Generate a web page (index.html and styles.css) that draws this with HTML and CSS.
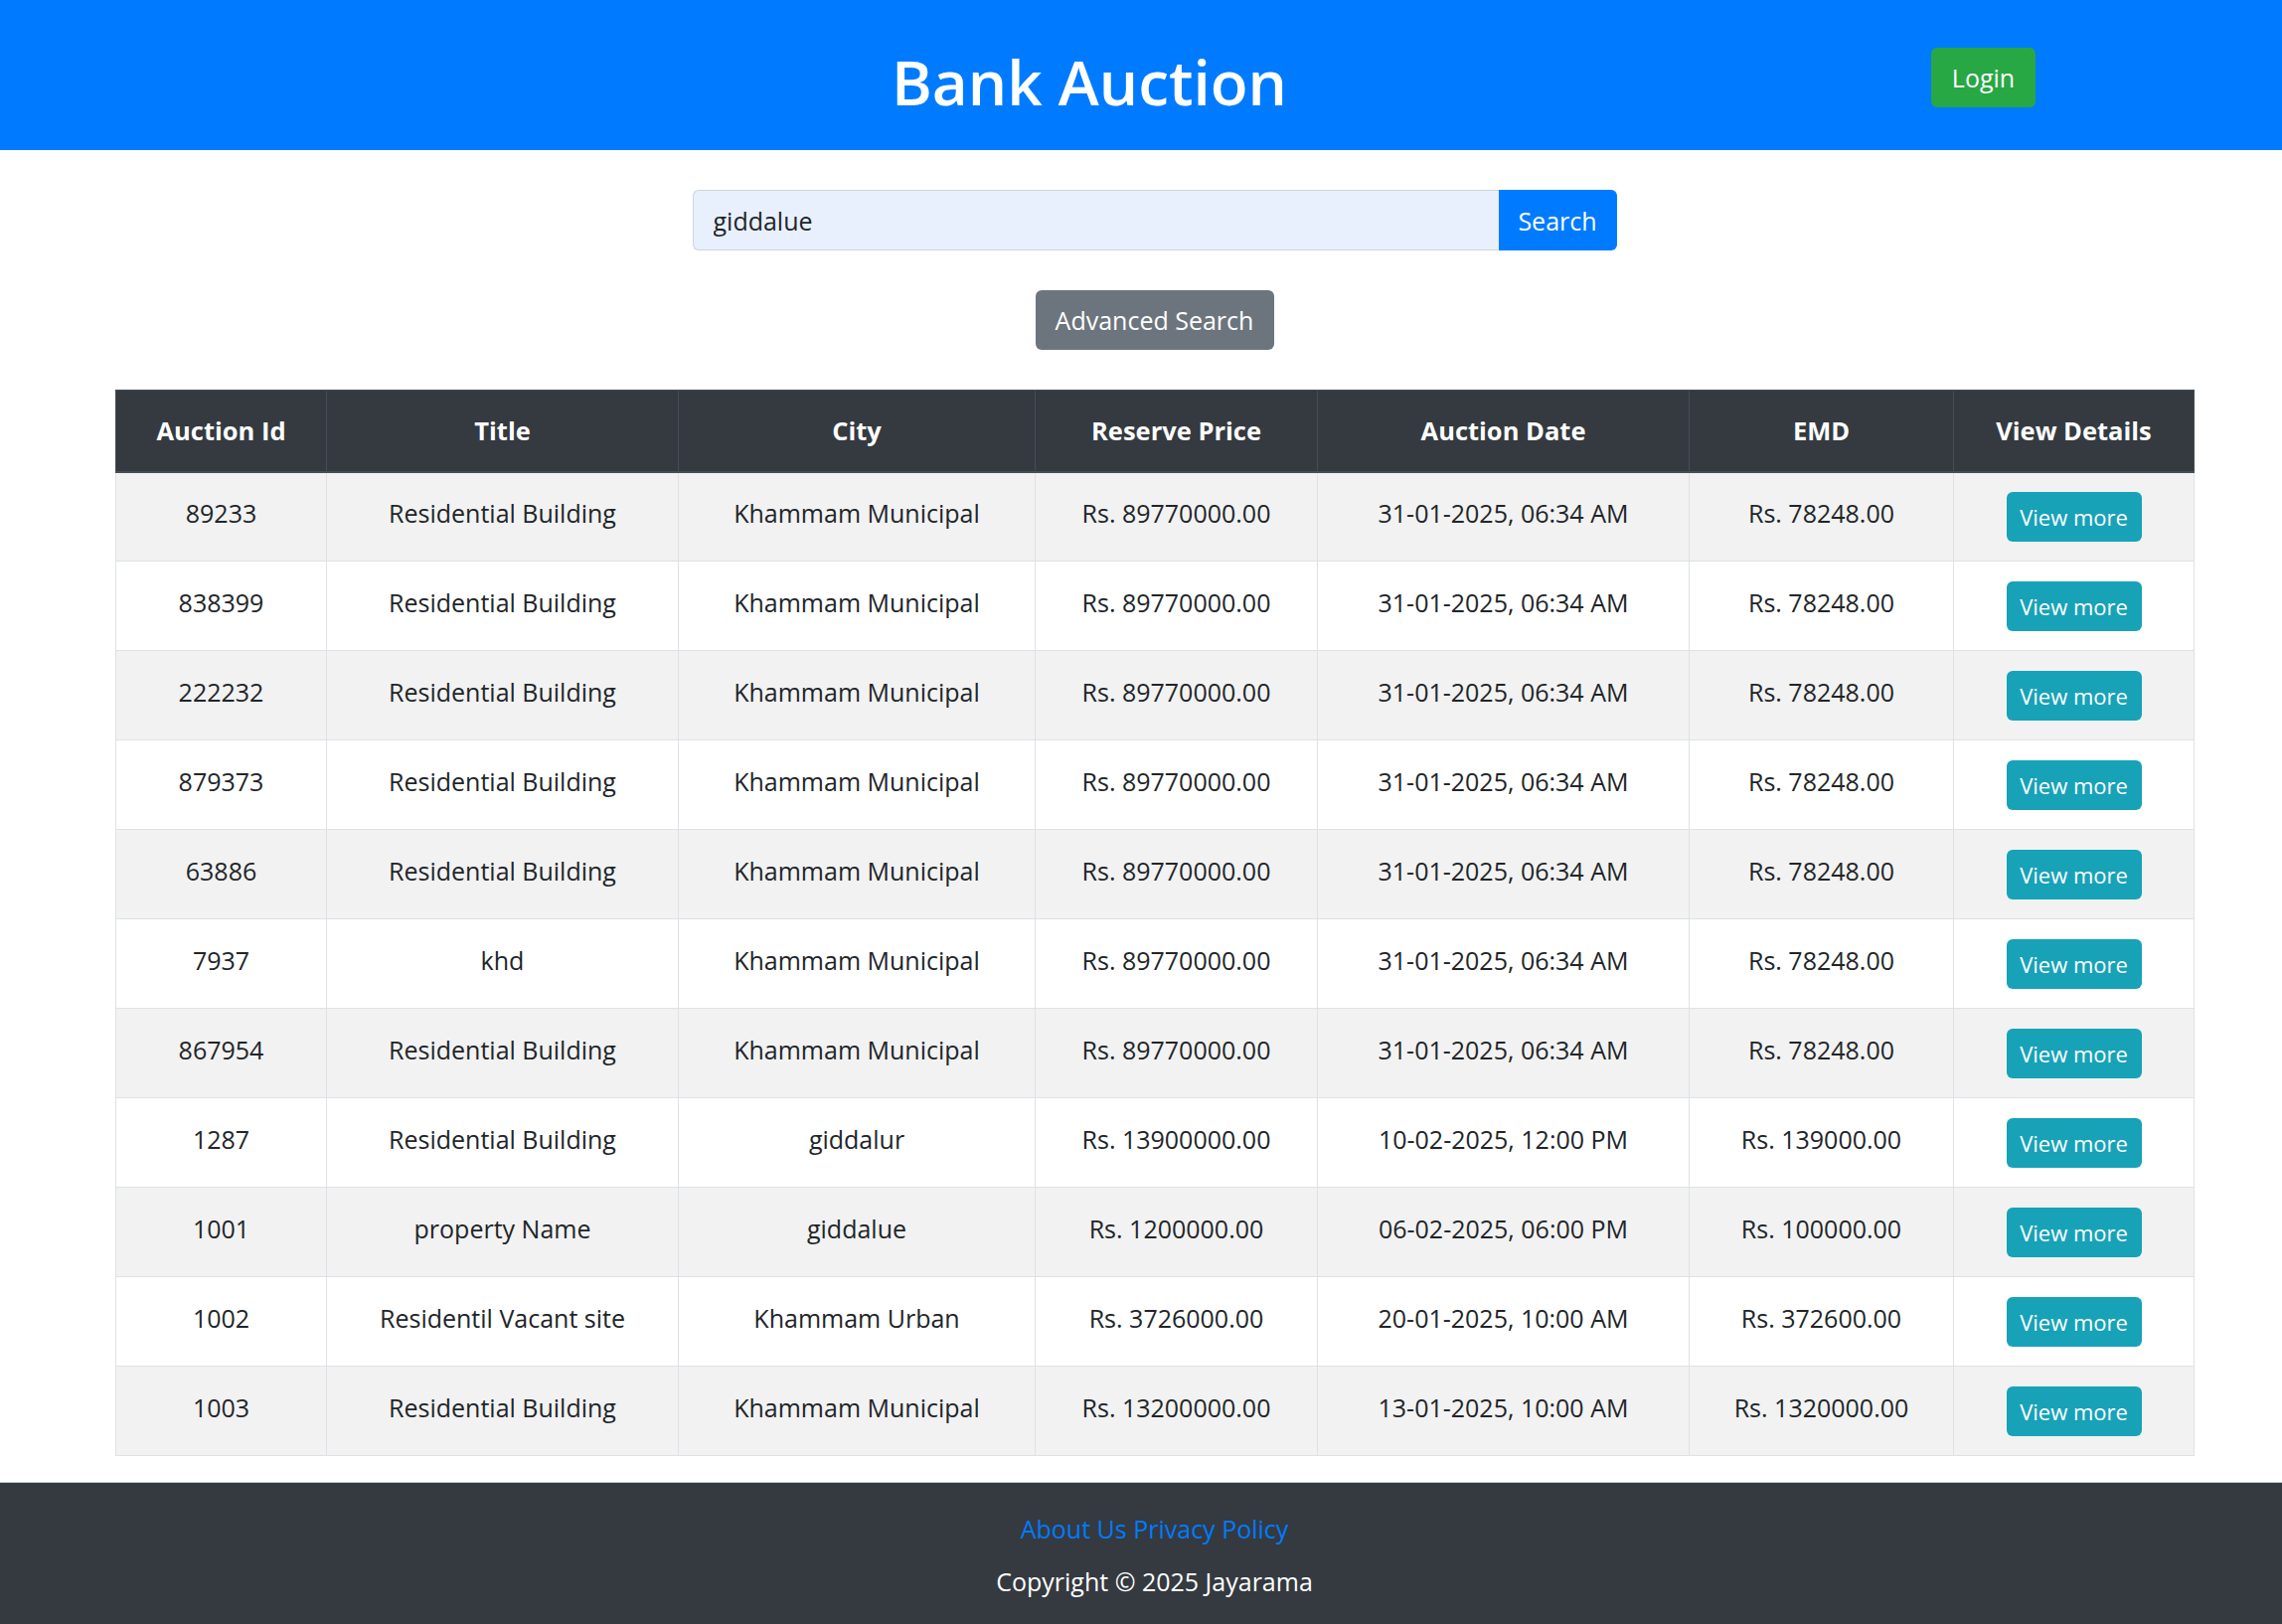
FILE: index.html
```html
<!DOCTYPE html>
<html lang="en">
<head>
<meta charset="utf-8">
<title>Bank Auction</title>
<link rel="stylesheet" href="styles.css">
</head>
<body>
<header class="topbar">
  <h1 class="brand">Bank Auction</h1>
  <button class="btn btn-login">Login</button>
</header>
<main class="main">
  <form class="search-form">
    <input class="search-input" type="text" value="giddalue">
    <button class="btn btn-search" type="button">Search</button>
  </form>
  <div class="adv-row">
    <button class="btn btn-adv" type="button">Advanced Search</button>
  </div>
  <table class="auctions">
    <thead>
      <tr>
        <th class="c-id">Auction Id</th>
        <th class="c-title">Title</th>
        <th class="c-city">City</th>
        <th class="c-price">Reserve Price</th>
        <th class="c-date">Auction Date</th>
        <th class="c-emd">EMD</th>
        <th class="c-view">View Details</th>
      </tr>
    </thead>
    <tbody>
      <tr><td>89233</td><td>Residential Building</td><td>Khammam Municipal</td><td>Rs. 89770000.00</td><td>31-01-2025, 06:34 AM</td><td>Rs. 78248.00</td><td><a class="btn btn-view">View more</a></td></tr>
      <tr><td>838399</td><td>Residential Building</td><td>Khammam Municipal</td><td>Rs. 89770000.00</td><td>31-01-2025, 06:34 AM</td><td>Rs. 78248.00</td><td><a class="btn btn-view">View more</a></td></tr>
      <tr><td>222232</td><td>Residential Building</td><td>Khammam Municipal</td><td>Rs. 89770000.00</td><td>31-01-2025, 06:34 AM</td><td>Rs. 78248.00</td><td><a class="btn btn-view">View more</a></td></tr>
      <tr><td>879373</td><td>Residential Building</td><td>Khammam Municipal</td><td>Rs. 89770000.00</td><td>31-01-2025, 06:34 AM</td><td>Rs. 78248.00</td><td><a class="btn btn-view">View more</a></td></tr>
      <tr><td>63886</td><td>Residential Building</td><td>Khammam Municipal</td><td>Rs. 89770000.00</td><td>31-01-2025, 06:34 AM</td><td>Rs. 78248.00</td><td><a class="btn btn-view">View more</a></td></tr>
      <tr><td>7937</td><td>khd</td><td>Khammam Municipal</td><td>Rs. 89770000.00</td><td>31-01-2025, 06:34 AM</td><td>Rs. 78248.00</td><td><a class="btn btn-view">View more</a></td></tr>
      <tr><td>867954</td><td>Residential Building</td><td>Khammam Municipal</td><td>Rs. 89770000.00</td><td>31-01-2025, 06:34 AM</td><td>Rs. 78248.00</td><td><a class="btn btn-view">View more</a></td></tr>
      <tr><td>1287</td><td>Residential Building</td><td>giddalur</td><td>Rs. 13900000.00</td><td>10-02-2025, 12:00 PM</td><td>Rs. 139000.00</td><td><a class="btn btn-view">View more</a></td></tr>
      <tr><td>1001</td><td>property Name</td><td>giddalue</td><td>Rs. 1200000.00</td><td>06-02-2025, 06:00 PM</td><td>Rs. 100000.00</td><td><a class="btn btn-view">View more</a></td></tr>
      <tr><td>1002</td><td>Residentil Vacant site</td><td>Khammam Urban</td><td>Rs. 3726000.00</td><td>20-01-2025, 10:00 AM</td><td>Rs. 372600.00</td><td><a class="btn btn-view">View more</a></td></tr>
      <tr><td>1003</td><td>Residential Building</td><td>Khammam Municipal</td><td>Rs. 13200000.00</td><td>13-01-2025, 10:00 AM</td><td>Rs. 1320000.00</td><td><a class="btn btn-view">View more</a></td></tr>
    </tbody>
  </table>
</main>
<footer class="footer">
  <div class="footer-links"><a href="#">About Us</a> <a href="#">Privacy Policy</a></div>
  <div class="copyright">Copyright © 2025 Jayarama</div>
</footer>
</body>
</html>
```

FILE: styles.css
```css
* { box-sizing: border-box; }

html, body {
  margin: 0;
  padding: 0;
}

body {
  font-family: "Open Sans", "Noto Sans", "Liberation Sans", sans-serif;
  font-size: 25px;
  line-height: 36px;
  color: #212529;
  background: #fff;
}

.btn {
  display: inline-block;
  border: 0;
  border-radius: 6px;
  font-family: inherit;
  font-size: 25px;
  line-height: 36px;
  color: #fff;
  padding: 0 18px;
  cursor: pointer;
  text-decoration: none;
  text-align: center;
}

.topbar {
  background: #007bff;
  height: 151px;
  display: flex;
  align-items: center;
  padding: 0 248px 0 249px;
}

.brand {
  flex: 1;
  margin: 0;
  padding-top: 12px;
  text-align: center;
  color: #fff;
  font-size: 62px;
  font-weight: 600;
  line-height: 72px;
}

.btn-login {
  background: #28a745;
  height: 60px;
  width: 105px;
  padding: 0;
  margin-top: 4px;
}

.main {
  padding: 40px 89px 26px 116px;
}

.search-form {
  display: flex;
  justify-content: center;
  margin: 0;
}

.search-input {
  width: 811px;
  height: 61px;
  border: 1.5px solid #ced4da;
  border-right: 0;
  border-radius: 6px 0 0 6px;
  background: #e8f0fe;
  font-family: inherit;
  font-size: 25px;
  color: #212529;
  padding: 0 20px;
  outline: none;
}

.btn-search {
  background: #007bff;
  width: 119px;
  height: 61px;
  padding: 0;
  border-radius: 0 6px 6px 0;
}

.adv-row {
  display: flex;
  justify-content: center;
  margin-top: 40px;
}

.btn-adv {
  background: #6c757d;
  width: 240px;
  height: 60px;
  padding: 0;
}

.auctions {
  margin-top: 40px;
  width: 100%;
  border-collapse: collapse;
  table-layout: fixed;
  border: 1px solid #dee2e6;
}

.auctions th,
.auctions td {
  text-align: center;
  border: 1px solid #dee2e6;
}

.auctions th {
  background: #343a40;
  color: #fff;
  font-weight: 700;
  font-size: 25.5px;
  height: 82px;
  padding: 0 12px;
  border-color: #454d55;
  border-bottom: 2px solid #454d55;
}

.auctions td {
  height: 90px;
  padding: 0 12px 8px;
  vertical-align: middle;
}

.auctions tbody tr:nth-child(odd) td {
  background: #f2f2f2;
}

.c-id { width: 212px; }
.c-title { width: 354px; }
.c-city { width: 359px; }
.c-price { width: 284px; }
.c-date { width: 374px; }
.c-emd { width: 266px; }
.c-view { width: 242px; }

.btn-view {
  background: #17a2b8;
  width: 136px;
  height: 50px;
  line-height: 50px;
  font-size: 22px;
  padding: 0;
  margin-top: 8px;
}

.footer {
  background: #343a40;
  border-top: 1px solid #c8cbcf;
  text-align: center;
  padding: 28px 89px 26px 116px;
}

.footer-links {
  line-height: 36px;
  margin-bottom: 17px;
}

.footer-links a {
  color: #007bff;
  text-decoration: none;
}

.copyright {
  color: #fff;
  line-height: 36px;
}
```
